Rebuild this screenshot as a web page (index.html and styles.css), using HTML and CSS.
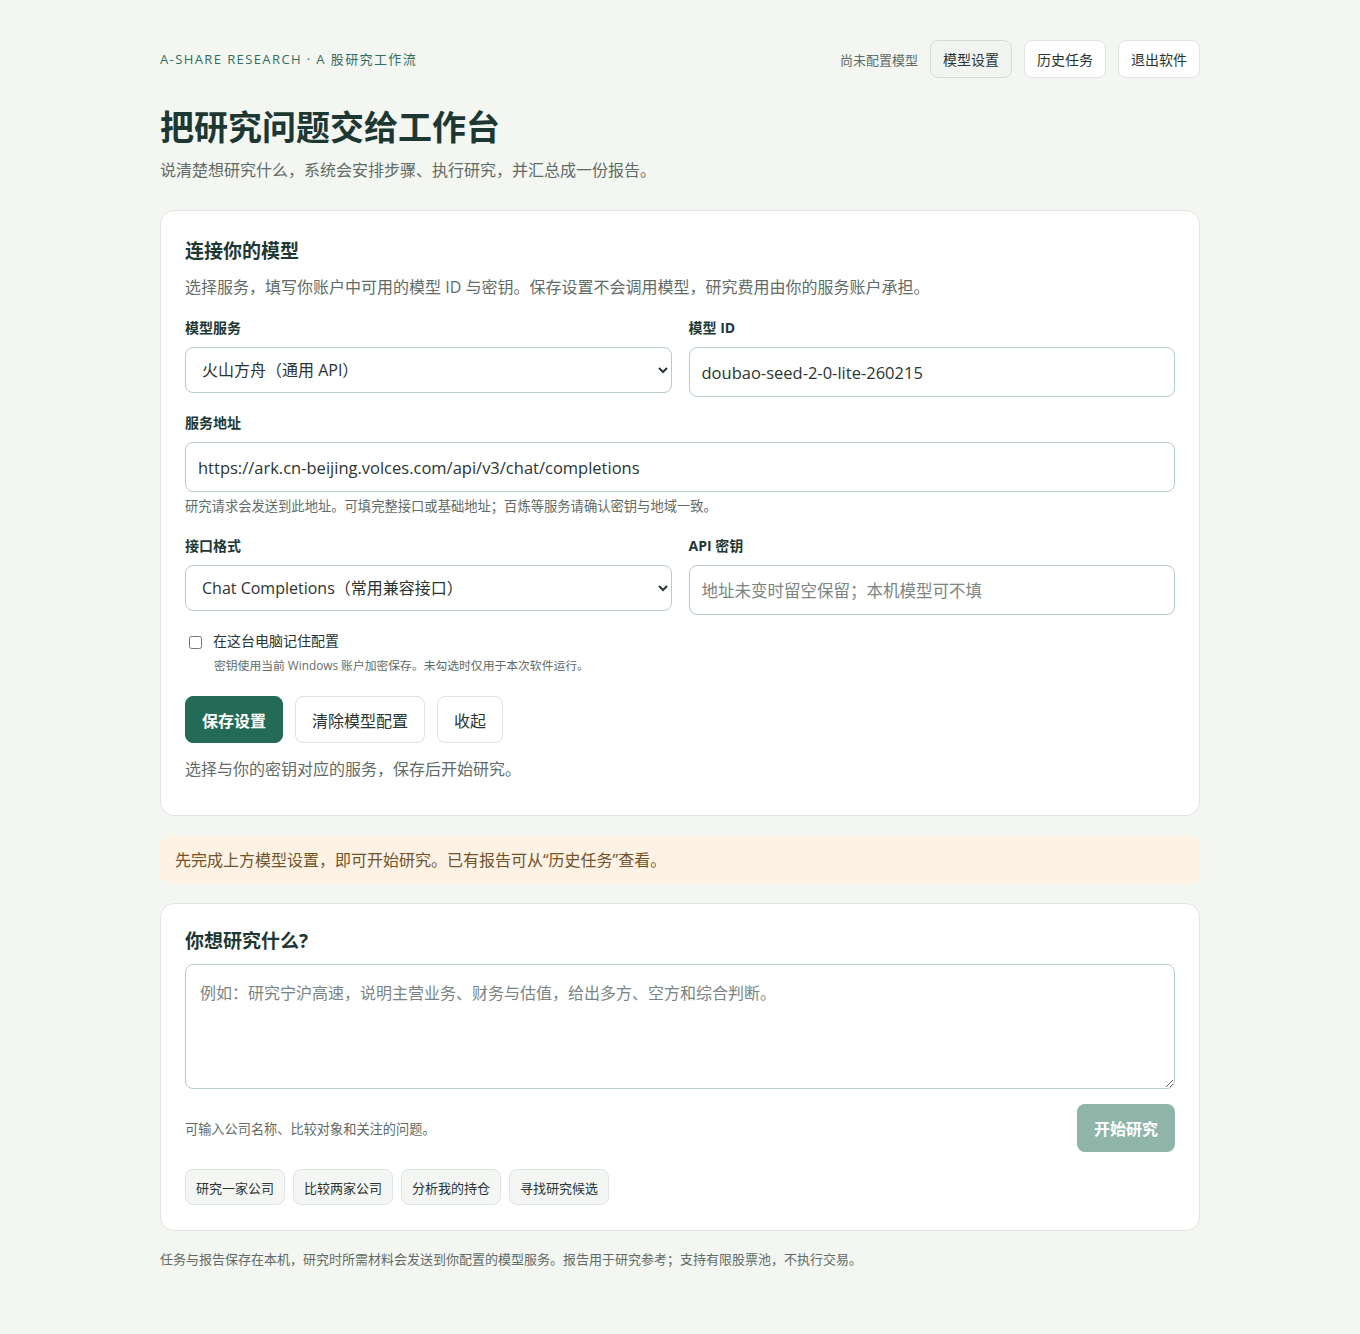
FILE: index.html
```html
<!DOCTYPE html>
<html lang="zh-CN">
<head>
  <meta charset="utf-8">
  <meta name="viewport" content="width=device-width, initial-scale=1.0">
  <title>A 股研究工作流</title>
  <link rel="stylesheet" href="styles.css">
</head>
<body>
  <div class="page">
    <header class="topbar">
      <div class="eyebrow">A-SHARE RESEARCH · A 股研究工作流</div>
      <nav class="top-actions">
        <span class="model-status">尚未配置模型</span>
        <button class="btn btn-ghost is-active">模型设置</button>
        <button class="btn btn-ghost">历史任务</button>
        <button class="btn btn-ghost">退出软件</button>
      </nav>
    </header>

    <section class="hero">
      <h1>把研究问题交给工作台</h1>
      <p class="lead">说清楚想研究什么，系统会安排步骤、执行研究，并汇总成一份报告。</p>
    </section>

    <main class="stack">
      <!-- 模型配置 -->
      <section class="card card-model">
        <h2 class="card-title">连接你的模型</h2>
        <p class="card-desc">选择服务，填写你账户中可用的模型 ID 与密钥。保存设置不会调用模型，研究费用由你的服务账户承担。</p>

        <div class="form-grid">
          <div class="field">
            <label class="field-label" for="provider">模型服务</label>
            <select id="provider" class="control control-select">
              <option>火山方舟（通用 API）</option>
            </select>
          </div>
          <div class="field">
            <label class="field-label" for="modelId">模型 ID</label>
            <input id="modelId" class="control" type="text" value="doubao-seed-2-0-lite-260215">
          </div>

          <div class="field field-wide">
            <label class="field-label" for="baseUrl">服务地址</label>
            <input id="baseUrl" class="control" type="text" value="https://ark.cn-beijing.volces.com/api/v3/chat/completions">
            <p class="field-hint">研究请求会发送到此地址。可填完整接口或基础地址；百炼等服务请确认密钥与地域一致。</p>
          </div>

          <div class="field">
            <label class="field-label" for="apiFormat">接口格式</label>
            <select id="apiFormat" class="control control-select">
              <option>Chat Completions（常用兼容接口）</option>
            </select>
          </div>
          <div class="field">
            <label class="field-label" for="apiKey">API 密钥</label>
            <input id="apiKey" class="control" type="password" placeholder="地址未变时留空保留；本机模型可不填">
          </div>
        </div>

        <div class="remember">
          <label class="remember-row">
            <input type="checkbox" class="remember-box">
            <span>在这台电脑记住配置</span>
          </label>
          <p class="remember-hint">密钥使用当前 Windows 账户加密保存。未勾选时仅用于本次软件运行。</p>
        </div>

        <div class="actions">
          <button class="btn btn-primary">保存设置</button>
          <button class="btn btn-outline">清除模型配置</button>
          <button class="btn btn-outline">收起</button>
        </div>
        <p class="card-note">选择与你的密钥对应的服务，保存后开始研究。</p>
      </section>

      <div class="notice">先完成上方模型设置，即可开始研究。已有报告可从“历史任务”查看。</div>

      <!-- 研究问题 -->
      <section class="card card-ask">
        <h2 class="card-title">你想研究什么?</h2>
        <textarea class="question" placeholder="例如：研究宁沪高速，说明主营业务、财务与估值，给出多方、空方和综合判断。"></textarea>
        <div class="ask-row">
          <span class="ask-hint">可输入公司名称、比较对象和关注的问题。</span>
          <button class="btn btn-start" disabled>开始研究</button>
        </div>
        <div class="chips">
          <button class="chip">研究一家公司</button>
          <button class="chip">比较两家公司</button>
          <button class="chip">分析我的持仓</button>
          <button class="chip">寻找研究候选</button>
        </div>
      </section>
    </main>

    <footer class="footnote">任务与报告保存在本机，研究时所需材料会发送到你配置的模型服务。报告用于研究参考；支持有限股票池，不执行交易。</footer>
  </div>
</body>
</html>
```

FILE: styles.css
```css
:root {
  --font: "Open Sans", "Noto Sans CJK SC", sans-serif;
  --page-bg: #f4f6f1;
  --card-bg: #ffffff;
  --card-border: #dfe6e1;
  --text-dark: #1d3833;
  --text: #2a3532;
  --text-muted: #5f6b67;
  --accent: #2e6e62;
  --primary: #236b57;
  --primary-disabled: #8fb5a8;
  --control-border: #b8cbc6;
}

* {
  box-sizing: border-box;
  margin: 0;
  padding: 0;
}

body {
  font-family: var(--font);
  background: var(--page-bg);
  color: var(--text);
}

button,
input,
select,
textarea {
  font-family: inherit;
}

.page {
  width: 1040px;
  margin: 0 auto;
  padding: 40px 0 66px;
}

/* header */
.topbar {
  display: flex;
  align-items: center;
  justify-content: space-between;
}

.eyebrow {
  font-size: 13px;
  letter-spacing: 1.4px;
  color: var(--accent);
  margin-top: -2px;
}

.top-actions {
  display: flex;
  align-items: center;
  gap: 12px;
}

.model-status {
  font-size: 13px;
  color: var(--text-muted);
}

.btn {
  border-radius: 8px;
  cursor: pointer;
  font-size: 14px;
  color: var(--text);
}

.btn-ghost {
  height: 38px;
  padding: 0 12px;
  background: #fff;
  border: 1px solid #dfe5e2;
}

.btn-ghost.is-active {
  background: #f2f4f1;
  border-color: #d3ddd8;
}

.hero {
  margin-top: 26px;
}

.hero h1 {
  font-size: 34px;
  line-height: 46px;
  font-weight: 700;
  color: var(--text-dark);
}

.lead {
  margin-top: 7px;
  font-size: 16px;
  color: var(--text-muted);
}

.stack {
  margin-top: 29px;
  display: flex;
  flex-direction: column;
  gap: 20px;
}

/* cards */
.card {
  background: var(--card-bg);
  border: 1px solid var(--card-border);
  border-radius: 14px;
  padding: 24px 24px 25px;
}

.card-model {
  padding: 27px 24px 35px;
}

.card-title {
  font-size: 19px;
  line-height: 26px;
  font-weight: 700;
  color: var(--text-dark);
}

.card-desc {
  margin-top: 12px;
  font-size: 16px;
  line-height: 22px;
  color: var(--text-muted);
}

.form-grid {
  margin-top: 20px;
  display: grid;
  grid-template-columns: 1fr 1fr;
  column-gap: 17px;
  row-gap: 16px;
  align-items: start;
}

.field-wide {
  grid-column: 1 / -1;
}

.field-label {
  display: block;
  font-size: 14px;
  line-height: 20px;
  font-weight: 700;
  color: var(--text-dark);
  margin-bottom: 9px;
}

.control {
  display: block;
  width: 100%;
  height: 50px;
  padding: 0 12px;
  border: 1px solid var(--control-border);
  border-radius: 8px;
  background: #fff;
  font-size: 16.5px;
  color: var(--text);
}

.control::placeholder {
  color: #7a8583;
}

.control-select {
  height: 46px;
  padding: 0 12px;
  font-size: 16px;
}

.field-hint {
  margin: 5px 0 5px;
  font-size: 13.3px;
  line-height: 18px;
  color: var(--text-muted);
}

.remember {
  margin-top: 16px;
}

.remember-row {
  display: flex;
  align-items: center;
  gap: 11px;
  font-size: 14px;
  line-height: 20px;
  color: var(--text);
}

.remember-box {
  width: 13px;
  height: 13px;
  margin: 3px 0 0 4px;
}

.remember-hint {
  margin: 5px 0 0 29px;
  font-size: 11.8px;
  line-height: 18px;
  color: var(--text-muted);
}

.actions {
  margin-top: 22px;
  display: flex;
  gap: 12px;
}

.actions .btn {
  height: 47px;
  padding: 0 16px;
  font-size: 16px;
}

.btn-primary {
  background: var(--primary);
  border: 1px solid var(--primary);
  color: #fff;
  font-weight: 700;
}

.btn-outline {
  background: #fff;
  border: 1px solid #dde4e1;
}

.card-note {
  margin-top: 15px;
  font-size: 16px;
  line-height: 22px;
  color: var(--text-muted);
}

.notice {
  background: #fdf2e3;
  border-radius: 10px;
  padding: 13px 15px;
  margin-bottom: -1px;
  font-size: 16px;
  line-height: 22px;
  color: #73532a;
}

/* question card */
.question {
  display: block;
  width: 100%;
  height: 125px;
  margin-top: 10px;
  padding: 17px 14px;
  border: 1px solid var(--control-border);
  border-radius: 8px;
  font-size: 16px;
  line-height: 22px;
  color: var(--text);
  resize: vertical;
}

.question::placeholder {
  color: #7a8583;
}

.ask-row {
  margin-top: 15px;
  display: flex;
  align-items: center;
  justify-content: space-between;
}

.ask-hint {
  font-size: 13.2px;
  color: var(--text-muted);
}

.btn-start {
  height: 48px;
  padding: 0 17px;
  border: none;
  border-radius: 8px;
  background: var(--primary-disabled);
  color: #fff;
  font-size: 16px;
  font-weight: 700;
}

.chips {
  margin-top: 17px;
  display: flex;
  gap: 8px;
}

.chip {
  height: 36px;
  padding: 0 10px;
  border: 1px solid #dfe5e1;
  border-radius: 8px;
  background: #f4f6f3;
  font-size: 13px;
  color: var(--text);
}

.footnote {
  margin-top: 19px;
  font-size: 13px;
  line-height: 18px;
  color: var(--text-muted);
}
```
